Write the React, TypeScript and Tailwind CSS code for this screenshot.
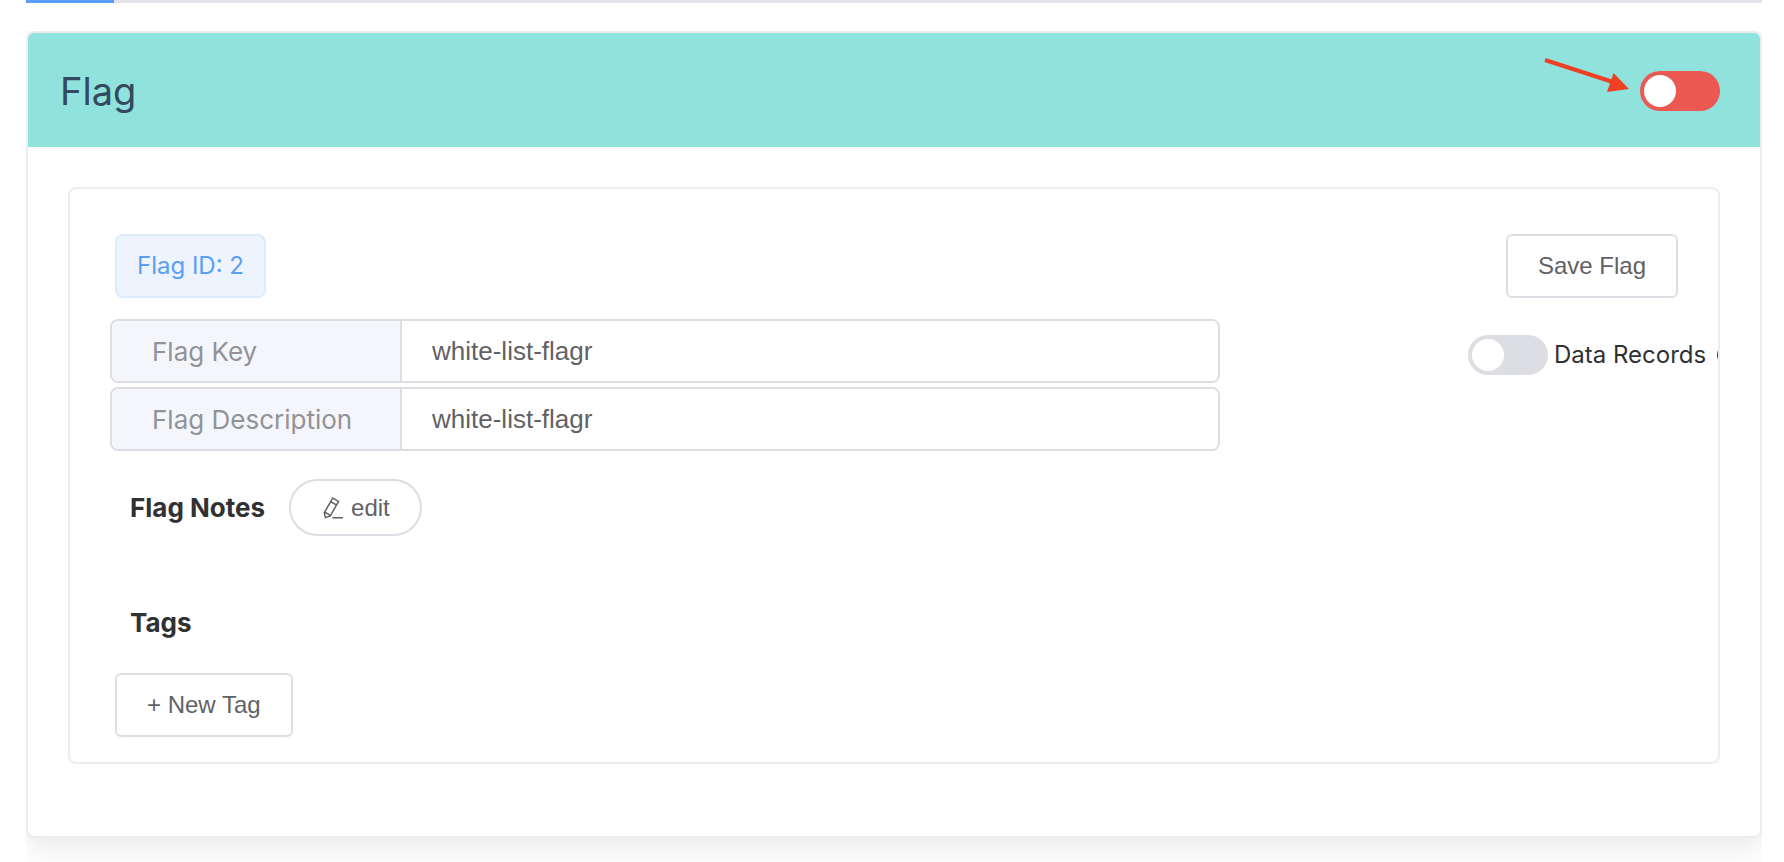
import { useState } from "react";
import type { ReactNode } from "react";

function Switch({ label, className }: { label: string; className: string }) {
  const [on, setOn] = useState(false);
  return (
    <input
      type="checkbox"
      role="switch"
      aria-label={label}
      checked={on}
      onChange={(e) => setOn(e.target.checked)}
      className={
        "flex h-10 w-20 shrink-0 cursor-pointer appearance-none items-center rounded-full px-1 before:size-8 before:rounded-full before:bg-white before:content-[''] checked:justify-end checked:bg-[#13ce66] " +
        className
      }
    />
  );
}

function Button({ children }: { children: ReactNode }) {
  return (
    <button
      type="button"
      className="h-16 cursor-pointer rounded-md border-2 border-[#dddee4] bg-white px-[30px] font-['Liberation_Sans',sans-serif] text-2xl text-[#606266]"
    >
      {children}
    </button>
  );
}

function Field({ id, label, value }: { id: string; label: string; value: string }) {
  return (
    <div className="flex h-16 overflow-hidden rounded-lg border-2 border-[#dddee4] text-[26px]">
      <label
        htmlFor={id}
        className="flex w-[290px] shrink-0 items-center border-r-2 border-[#dddee4] bg-[#f5f6fb] px-10 text-[#929398]"
      >
        {label}
      </label>
      <input
        id={id}
        type="text"
        defaultValue={value}
        className="min-w-0 flex-1 bg-white px-[30px] font-['Liberation_Sans',sans-serif] text-[#606266] outline-none"
      />
    </div>
  );
}

function PenIcon() {
  return (
    <svg viewBox="0 0 1024 1024" className="size-6" fill="currentColor" aria-hidden="true">
      <path d="m199.04 672.64 193.984 112 224-387.968-193.92-112-224 388.032zm-23.872 60.16 32.896 148.288 144.896-45.696zM455.04 229.248l193.92 112 56.704-98.112-193.984-112-56.64 98.112zM104.32 708.8l384-665.024 304.768 175.936L409.152 884.8h.064l-248.448 78.336zm384 254.272v-64h448v64h-448z" />
    </svg>
  );
}

function InfoIcon() {
  return (
    <svg viewBox="0 0 24 24" className="ml-1 size-6 shrink-0" fill="none" stroke="currentColor" strokeWidth="2" aria-hidden="true">
      <circle cx="12" cy="12" r="10" />
      <path d="M12 11v6M12 7v1" />
    </svg>
  );
}

export default function App() {
  return (
    <main className="bg-white pr-[22px] pl-[26px] font-[Inter,sans-serif] text-[#303133]">
      <div className="mb-7 h-[3px] bg-[#e4e5ec]">
        <div className="h-full w-[88px] bg-[#5a9ef8]" />
      </div>

      <div className="overflow-hidden pb-6">
        <section className="overflow-hidden rounded-lg border-2 border-[#ecedf3] bg-white shadow-[0_8px_32px_rgba(0,0,0,0.1)]">
          <header className="flex h-[114px] items-center justify-between bg-[#90e2dd] pt-0.5 pr-10 pl-8">
            <h2 className="text-[38px] text-[#34495e]">Flag</h2>
            <div className="flex items-center gap-2">
              <svg viewBox="0 0 88 72" className="h-[72px] w-[88px]" aria-hidden="true">
                <path d="M1 5 L69 27" stroke="#ee4023" strokeWidth="4" />
                <path d="M85 34 L69.500 18 L63 37 Z" fill="#ee4023" />
              </svg>
              <Switch label="Flag enabled" className="bg-[#ec5852]" />
            </div>
          </header>

          <div className="px-10 pt-10 pb-[72px]">
            <div className="overflow-hidden rounded-lg border-2 border-[#ecedf3] pt-[45px] pb-[25px]">
              <div className="flex items-center justify-between pr-10 pl-[45px]">
                <span className="flex h-16 items-center rounded-lg border-2 border-[#dcebfd] bg-[#edf4fe] px-5 text-2xl text-[#5a9ef8]">
                  Flag ID: 2
                </span>
                <Button>Save Flag</Button>
              </div>

              <div className="mt-[21px] flex items-start pl-10">
                <div className="flex w-[69%] shrink-0 flex-col gap-1">
                  <Field id="flag-key" label="Flag Key" value="white-list-flagr" />
                  <Field id="flag-description" label="Flag Description" value="white-list-flagr" />
                </div>
                <div className="ml-auto flex w-[250px] shrink-0 items-center gap-1.5 pt-4 text-2xl whitespace-nowrap">
                  <Switch label="Data Records" className="bg-[#dddee4]" />
                  <span>Data Records</span>
                  <InfoIcon />
                </div>
              </div>

              <div className="mt-7 flex items-center gap-6 pl-[60px]">
                <h3 className="text-[26px] leading-8 font-bold">Flag Notes</h3>
                <button
                  type="button"
                  className="flex h-[57px] cursor-pointer items-center gap-1.5 rounded-full border-2 border-[#dddee4] bg-white px-[30px] font-['Liberation_Sans',sans-serif] text-2xl text-[#606266]"
                >
                  <PenIcon />
                  edit
                </button>
              </div>

              <h3 className="mt-[71px] pl-[60px] text-[26px] leading-8 font-bold">Tags</h3>
              <div className="mt-[34px] pl-[45px]">
                <Button>+ New Tag</Button>
              </div>
            </div>
          </div>
        </section>
      </div>
    </main>
  );
}
